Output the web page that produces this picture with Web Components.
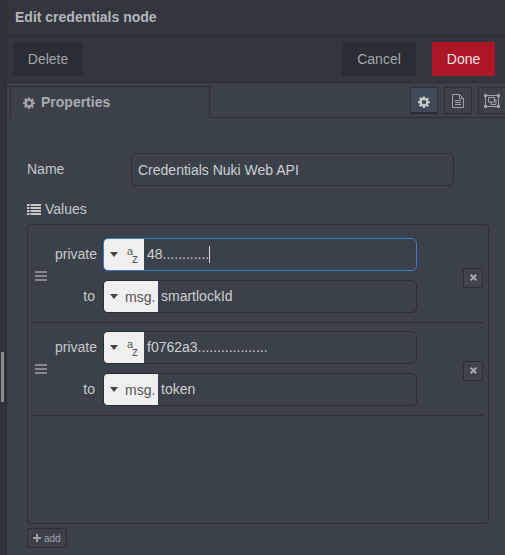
<!DOCTYPE html>
<html>
<head>
<meta charset="utf-8">
<title>Edit credentials node</title>
<style>
    html, body { margin: 0; height: 100%; background: #3b414b; }
    body { font-family: "Liberation Sans", Arial, sans-serif; color: #c6c8ca; overflow: hidden; }
</style>
</head>
<body>

<edit-tray>
    <tray-bar slot="head" title-text="Edit credentials node">
        <tray-button slot="left" style="width:70px">Delete</tray-button>
        <tray-button slot="right" style="width:74px">Cancel</tray-button>
        <tray-button slot="right" style="width:63px" primary>Done</tray-button>
    </tray-bar>
    <tab-bar slot="head" label="Properties"></tab-bar>

    <name-row label="Name" value="Credentials Nuki Web API"></name-row>
    <values-list>
        <value-row>
            <typed-input label="private" type="str" value="48............" focused></typed-input>
            <typed-input label="to" type="msg" value="smartlockId"></typed-input>
        </value-row>
        <value-row>
            <typed-input label="private" type="str" value="f0762a3.................."></typed-input>
            <typed-input label="to" type="msg" value="token"></typed-input>
        </value-row>
    </values-list>
</edit-tray>

<script>
const ICONS = {
    // font-awesome style cog, used in the tab and the sidebar button
    cog: `<svg viewBox="0 0 24 24" width="100%" height="100%"><path fill="currentColor" fill-rule="evenodd" d="M10 1h4l.6 3.2 1.9.8 2.7-1.8 2.8 2.8-1.8 2.7.8 1.9L24 10v4l-3.2.6-.8 1.9 1.8 2.7-2.8 2.8-2.7-1.8-1.9.8L14 24h-4l-.6-3.2-1.9-.8-2.7 1.8-2.8-2.8 1.8-2.7-.8-1.9L0 14v-4l3.2-.6.8-1.9-1.8-2.7 2.8-2.8 2.7 1.8 1.9-.8zM12 8a4.3 4.3 0 1 0 0 8.600A4.3 4.3 0 0 0 12 8z"/></svg>`,
    doc: `<svg viewBox="0 0 12 14" width="100%" height="100%" fill="none" stroke="currentColor" stroke-width="1"><path d="M.5.5h7l4 4v9h-11zM7.500.5v4h4M3 6.500h6M3 8.500h6M3 10.500h6"/></svg>`,
    frame: `<svg viewBox="0 0 16 14" width="100%" height="100%" fill="none" stroke="currentColor" stroke-width="1"><path d="M2 1.500h12M2 12.500h12M1.500 2v10M14.500 2v10M4.500 3.500h6v4.500h-6zM7 8v2.500h5v-4.500h-1.500"/><g fill="currentColor" stroke="none"><rect x="0" y="0" width="3" height="3"/><rect x="13" y="0" width="3" height="3"/><rect x="0" y="11" width="3" height="3"/><rect x="13" y="11" width="3" height="3"/></g></svg>`,
    list: `<svg viewBox="0 0 14 11" width="14" height="11"><path fill="currentColor" d="M0 0h2.500v2h-2.500zM3.500 0h10.500v2h-10.500zM0 3h2.500v2h-2.500zM3.500 3h10.500v2h-10.500zM0 6h2.500v2h-2.500zM3.500 6h10.500v2h-10.500zM0 9h2.500v2h-2.500zM3.500 9h10.500v2h-10.500z"/></svg>`,
    times: `<svg viewBox="0 0 8 8" width="7" height="7"><path fill="currentColor" d="M1.600 0l2.400 2.400 2.400-2.400 1.600 1.600-2.400 2.400 2.400 2.400-1.600 1.600-2.400-2.400-2.400 2.400-1.600-1.600 2.400-2.400-2.400-2.400z"/></svg>`,
    plus: `<svg viewBox="0 0 8 8" width="8" height="8"><path fill="currentColor" d="M3 0h2v3h3v2h-3v3h-2v-3h-3v-2h3z"/></svg>`
};

const define = ( name, css, html ) => {
    customElements.define( name, class extends HTMLElement {
        constructor() {
            super();
            this.attachShadow({ mode: 'open' });
        }
        connectedCallback() {
            this.shadowRoot.innerHTML = `<style>${ css }</style>${ typeof html === 'function' ? html( this ) : html }`;
        }
    });
};

define( 'edit-tray', `
    :host { display: flex; width: 505px; height: 555px; background: #3b414b; }
    .strip { width: 6px; flex: none; background: #2f323a; border-right: 1px solid #292c33; position: relative; }
    .grip { position: absolute; left: 1px; top: 352px; width: 3px; height: 50px; background: #8b8d90; }
    .main { flex: 1; min-width: 0; display: flex; flex-direction: column; }
    .form { padding: 35px 16px 0 20px; }
`, `
    <div class="strip"><div class="grip"></div></div>
    <div class="main">
        <slot name="head"></slot>
        <div class="form"><slot></slot></div>
    </div>
` );

define( 'tray-bar', `
    :host { display: block; background: #33363f; }
    .title { height: 36px; box-sizing: border-box; padding: 10px 0 0 8px; font-size: 14px; line-height: 15px; font-weight: bold; color: #b4b6b9; border-bottom: 1px solid #2a2d34; }
    .actions { height: 47px; box-sizing: border-box; display: flex; justify-content: space-between; padding: 6px 10px 0 6px; border-bottom: 1px solid #2a2d34; }
    .group { display: flex; gap: 16px; }
`, el => `
    <div class="title">${ el.getAttribute( 'title-text' ) }</div>
    <div class="actions">
        <div class="group"><slot name="left"></slot></div>
        <div class="group"><slot name="right"></slot></div>
    </div>
` );

define( 'tray-button', `
    :host { display: block; height: 34px; background: #292d34; color: #a4a6a9; font-size: 14px; line-height: 34px; text-align: center; }
    :host([primary]) { background: #ad1625; color: #f0e4e5; }
`, `<slot></slot>` );

define( 'tab-bar', `
    :host { display: flex; height: 35px; box-sizing: border-box; padding: 3px 0 0 3px; border-bottom: 1px solid #2a2d34; background: #3b414b; }
    .tab { width: 200px; height: 32px; box-sizing: border-box; display: flex; align-items: center; gap: 6px; padding: 0 0 2px 12px; border: 1px solid #2a2d34; border-bottom: 0; background: #3b414b; color: #a9abae; font-size: 14px; font-weight: bold; }
    .tab .ico { width: 12px; height: 12px; color: #a0a2a5; }
    .tools { margin-left: auto; margin-right: -1px; display: flex; gap: 6px; padding-top: 1px; }
    .tool { width: 28px; height: 27px; box-sizing: border-box; border: 1px solid #2a2d34; color: #a0a2a5; display: flex; align-items: center; justify-content: center; }
    .tool span { display: block; flex: none; }
    .tool.on { background: #3f4b58; border-bottom-width: 2px; color: #c6c8ca; }
`, el => `
    <div class="tab"><span class="ico">${ ICONS.cog }</span><span>${ el.getAttribute( 'label' ) }</span></div>
    <div class="tools">
        <div class="tool on"><span style="width:12px;height:12px">${ ICONS.cog }</span></div>
        <div class="tool"><span style="width:12px;height:14px">${ ICONS.doc }</span></div>
        <div class="tool"><span style="width:16px;height:14px">${ ICONS.frame }</span></div>
    </div>
` );

define( 'name-row', `
    :host { display: flex; align-items: center; height: 33px; }
    label { width: 104px; flex: none; font-size: 14px; color: #c6c8ca; margin-top: -2px; }
    .box { width: 323px; height: 33px; box-sizing: border-box; border: 1px solid #2a2d34; border-radius: 5px; padding: 0 6px; font-size: 14px; line-height: 32px; color: #cdcfd1; }
`, el => `
    <label>${ el.getAttribute( 'label' ) }</label>
    <div class="box">${ el.getAttribute( 'value' ) }</div>
` );

define( 'values-list', `
    :host { display: block; }
    .head { display: flex; align-items: center; gap: 4px; margin-top: 14px; height: 18px; font-size: 14px; color: #c6c8ca; }
    .head svg { margin-top: 1px; }
    .box { margin-top: 6px; height: 300px; width: 462px; box-sizing: border-box; border: 1px solid #2a2d34; border-radius: 4px; padding: 5px 5px 0; }
    .add { margin-top: 4px; display: flex; align-items: center; gap: 3px; width: 40px; height: 20px; box-sizing: border-box; border: 1px solid #2a2d34; border-radius: 2px; padding-left: 5px; font-size: 10px; color: #a0a2a5; }
`, `
    <div class="head">${ ICONS.list }<span>Values</span></div>
    <div class="box"><slot></slot></div>
    <div class="add">${ ICONS.plus }<span>add</span></div>
` );

define( 'value-row', `
    :host { display: flex; align-items: center; height: 93px; box-sizing: border-box; padding: 8px 0 9px 2px; border-bottom: 1px solid #2a2d34; }
    .grip { width: 12px; flex: none; display: grid; gap: 2px; }
    .grip i { display: block; height: 2px; background: #85888c; }
    .fields { width: 416px; flex: none; display: grid; gap: 9px; }
    .del { width: 20px; height: 20px; flex: none; box-sizing: border-box; border: 1px solid #2a2d34; border-radius: 2px; background: #3e444e; color: #a9abae; display: flex; align-items: center; justify-content: center; margin-top: 4px; }
`, `
    <div class="grip"><i></i><i></i><i></i></div>
    <div class="fields"><slot></slot></div>
    <div class="del">${ ICONS.times }</div>
` );

define( 'typed-input', `
    :host { display: flex; align-items: center; height: 33px; }
    .label { width: 56px; flex: none; text-align: right; padding-right: 6px; box-sizing: border-box; font-size: 14px; color: #c6c8ca; margin-top: -1px; }
    :host([type="msg"]) .label { padding-right: 8px; }
    .field { width: 314px; height: 33px; box-sizing: border-box; display: flex; align-items: stretch; border: 1px solid #2a2d34; border-radius: 5px; overflow: hidden; }
    :host([focused]) .field { border-color: #3a7cc9; }
    .pick { flex: none; display: flex; align-items: center; padding-left: 6px; background: #efefef; color: #555; font-size: 14px; box-sizing: border-box; }
    .pick.str { width: 40px; gap: 9px; }
    .pick.msg { width: 54px; gap: 7px; }
    .caret { width: 0; height: 0; border: 4px solid transparent; border-top: 5px solid #444; border-bottom: 0; flex: none; }
    .az { position: relative; width: 10px; height: 20px; display: block; }
    .az b { position: absolute; font-weight: normal; line-height: 10px; font-size: 11px; }
    .az b:first-child { left: 0; top: 1px; }
    .az b:last-child { left: 5px; top: 9px; font-size: 12px; }
    .text { padding-left: 3px; font-size: 14px; line-height: 31px; color: #cdcfd1; white-space: nowrap; }
    .cursor { display: inline-block; width: 1px; height: 17px; background: #d8d8d8; vertical-align: -4px; }
`, el => {
    const type = el.getAttribute( 'type' );
    const tag = type === 'msg' ? 'msg.' : '<span class="az"><b>a</b><b>z</b></span>';
    return `
    <div class="label">${ el.getAttribute( 'label' ) }</div>
    <div class="field">
        <div class="pick ${ type }"><span class="caret"></span>${ tag }</div>
        <div class="text">${ el.getAttribute( 'value' ) }${ el.hasAttribute( 'focused' ) ? '<span class="cursor"></span>' : '' }</div>
    </div>`;
});
</script>
</body>
</html>
